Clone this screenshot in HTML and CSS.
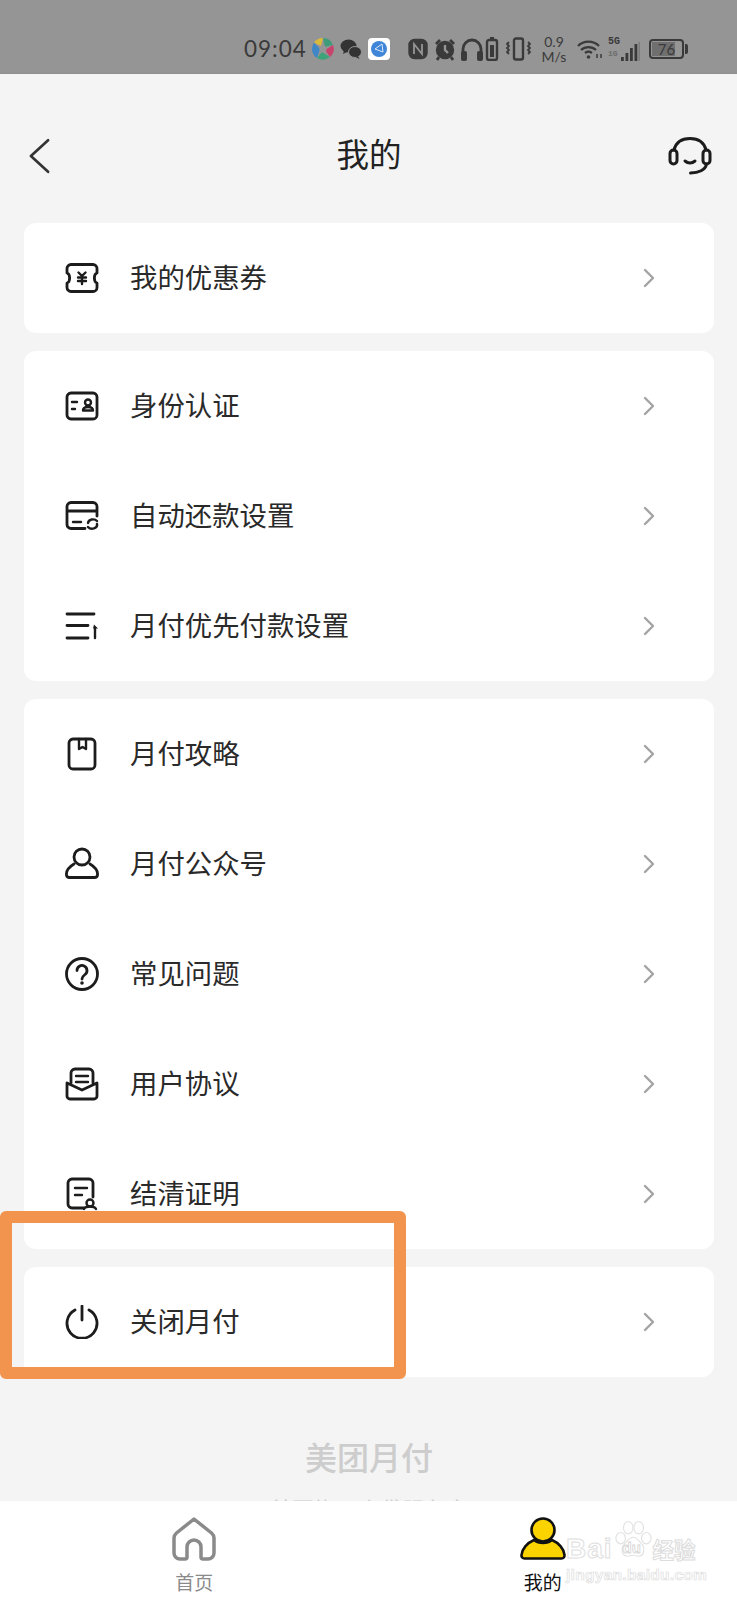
FILE: index.html
```html
<!DOCTYPE html>
<html lang="zh-CN">
<head>
<meta charset="utf-8">
<title>我的</title>
<link rel="stylesheet" href="styles.css">
</head>
<body>
<div class="screen">
  <div class="status">
    <span class="time">09:04</span>
    <div class="apps">
      <svg class="app" viewBox="0 0 22 22"><path d="M11 0A11 11 0 0 0 2 4.500L9 8Z" fill="#d9b93a"/><path d="M11 0A11 11 0 0 1 21 7L13 9Z" fill="#3f9c7a"/><path d="M21 7A11 11 0 0 1 18 19L13 12Z" fill="#c9446c"/><path d="M18 19A11 11 0 0 1 5 20L10 14Z" fill="#3fa37a"/><path d="M5 20A11 11 0 0 1 2 4.500L8 11Z" fill="#3f86c6"/><circle cx="11" cy="11" r="3.500" fill="#959595"/></svg>
      <svg class="app" viewBox="0 0 22 22" fill="#333"><ellipse cx="8.500" cy="8" rx="8" ry="6.500"/><path d="M4 12l-1 4 4-2z"/><ellipse cx="15" cy="14" rx="6.500" ry="5.500" stroke="#959595"/><path d="M18 18l1.500 3-4-2z"/></svg>
      <svg class="app" viewBox="0 0 22 22"><rect width="22" height="22" rx="4" fill="#fff"/><circle cx="11" cy="11" r="8" fill="#3f86d8"/><path d="M7 11L14 6M7 11l8 3M14 6l1 8" stroke="#dce9f7" stroke-width="1" fill="none"/></svg>
    </div>
    <svg class="sys" viewBox="0 0 123 24" fill="none" stroke="#3a3a3a" stroke-width="2.400">
      <rect x="1.500" y="3" width="17" height="18" rx="5" fill="#3a3a3a"/><path d="M6 17V7l8 10V7" stroke="#959595" stroke-width="1.800"/>
      <circle cx="37" cy="13" r="8" fill="#3a3a3a"/><path d="M37 8v5l3 3" stroke="#959595"/><path d="M28 7l4-4M46 7l-4-4M31 20l-2 3M43 20l2 3" stroke-width="2.800"/>
      <path d="M55 19v-7a9 9 0 0 1 18 0v7" stroke-width="2.800"/><rect x="53" y="14" width="6" height="10" rx="2" fill="#3a3a3a" stroke="none"/><rect x="69" y="14" width="6" height="10" rx="2" fill="#3a3a3a" stroke="none"/>
      <rect x="79" y="3" width="10" height="20" rx="2"/><rect x="82" y="8" width="4" height="12" fill="#3a3a3a" stroke="none"/><path d="M82 1h4"/>
      <rect x="106" y="1.500" width="9" height="21" rx="2"/><path d="M101 5l-2 2 2 2-2 2 2 2-2 2 2 2M120 5l2 2-2 2 2 2-2 2 2 2-2 2" stroke-width="1.800"/>
    </svg>
    <div class="speed"><span>0.9</span><span>M/s</span></div>
    <svg class="wifi" viewBox="0 0 26 20" fill="none" stroke="#3a3a3a" stroke-width="2.200"><path d="M1 7a15 15 0 0 1 21 0M4 11a11 11 0 0 1 15 0M8 14a6 6 0 0 1 7 0"/><circle cx="11.500" cy="18" r="1.800" fill="#3a3a3a" stroke="none"/><path d="M20 15v4M24 15v4" stroke-width="1.500"/></svg>
    <div class="net">
      <span class="gen">5G</span>
      <span class="gen2">1G</span>
      <svg class="bars" viewBox="0 0 20 20"><rect x="1" y="15" width="2.800" height="4" fill="#3a3a3a"/><rect x="5.500" y="11" width="2.800" height="8" fill="#3a3a3a"/><rect x="10" y="6" width="2.800" height="13" fill="#3a3a3a"/><rect x="14.500" y="2" width="2.800" height="17" fill="#3a3a3a"/><rect x="18.500" y="0" width="1.500" height="19" fill="#7c7c7c"/></svg>
    </div>
    <div class="batt"><span class="batt-body"><span class="batt-level"></span><span class="batt-num">76</span></span><span class="batt-tip"></span></div>
  </div>

  <header class="top">
    <svg class="back" viewBox="0 0 22 36" fill="none" stroke="#333" stroke-width="2.800" stroke-linecap="round" stroke-linejoin="round"><path d="M20 1.500L2 18l18 16.500"/></svg>
    <h1 class="title">我的</h1>
    <svg class="help" viewBox="0 0 44 38" fill="none" stroke="#1c1c1c" stroke-width="3" stroke-linecap="round"><path d="M6 13C8 5 14 1.500 22 1.500S36 5 38 13"/><rect x="2" y="13" width="7" height="14" rx="3.500"/><rect x="35" y="13" width="7" height="14" rx="3.500"/><path d="M17 24c3 2.500 7 2.500 10 0"/><path d="M38.500 27c-1 6-8 9-16 9"/></svg>
  </header>

  <main class="list">
    <section class="card">
      <div class="row">
        <svg class="ico" viewBox="0 0 34 30"><path d="M6 1.500h22a4 4 0 0 1 4 4V10c-3.500 1-3.500 9 0 10v4.500a4 4 0 0 1-4 4H6a4 4 0 0 1-4-4V20c3.500-1 3.500-9 0-10V5.500a4 4 0 0 1 4-4z"/><path class="thin" d="M13.500 9.500l3.500 3.500 3.500-3.500M13 14.500h8M13 18h8M17 13v8"/></svg>
        <span class="label">我的优惠券</span>
        <svg class="chev" viewBox="0 0 12 20"><path d="M2 2l8 8-8 8"/></svg>
      </div>
    </section>

    <section class="card">
      <div class="row">
        <svg class="ico" viewBox="0 0 34 30"><rect x="2" y="2" width="30" height="26" rx="4"/><path class="thin" d="M7 11h5M7 18h3"/><circle class="thin" cx="23" cy="11.500" r="3"/><path class="thin" d="M18 19.500c0-2.500 2-3.500 5-3.500s5 1 5 3.500z"/></svg>
        <span class="label">身份认证</span>
        <svg class="chev" viewBox="0 0 12 20"><path d="M2 2l8 8-8 8"/></svg>
      </div>
      <div class="row">
        <svg class="ico" viewBox="0 0 34 30"><path d="M20 27.500H6a4 4 0 0 1-4-4v-18a4 4 0 0 1 4-4h22a4 4 0 0 1 4 4V15M2 10h30"/><path class="thin" d="M8 21h8"/><path class="thin" d="M23 22a5 4 0 0 1 9-2M32 23a5 4 0 0 1-9 3"/></svg>
        <span class="label">自动还款设置</span>
        <svg class="chev" viewBox="0 0 12 20"><path d="M2 2l8 8-8 8"/></svg>
      </div>
      <div class="row">
        <svg class="ico" viewBox="0 0 34 30"><path d="M2 3h27M2 14.500h21M2 27h21"/><path class="thin" d="M30 27V17"/><path d="M33 17.500l-4-4-1 4z" fill="#1c1c1c" stroke="none"/></svg>
        <span class="label">月付优先付款设置</span>
        <svg class="chev" viewBox="0 0 12 20"><path d="M2 2l8 8-8 8"/></svg>
      </div>
    </section>

    <section class="card">
      <div class="row">
        <svg class="ico" viewBox="0 0 34 34"><rect x="4" y="2" width="26" height="30" rx="4"/><path class="thin" d="M14 2v10l3.500-2 3.500 2V2"/></svg>
        <span class="label">月付攻略</span>
        <svg class="chev" viewBox="0 0 12 20"><path d="M2 2l8 8-8 8"/></svg>
      </div>
      <div class="row">
        <svg class="ico" viewBox="0 0 34 34"><circle cx="17" cy="10" r="8"/><path d="M9 17C4 20 1 24 1.500 28c.2 1.500 1.500 2.500 3 2.500h25c1.500 0 2.800-1 3-2.500.5-4-2.500-8-7.500-11"/></svg>
        <span class="label">月付公众号</span>
        <svg class="chev" viewBox="0 0 12 20"><path d="M2 2l8 8-8 8"/></svg>
      </div>
      <div class="row">
        <svg class="ico" viewBox="0 0 34 34"><circle cx="17" cy="17" r="15.500"/><path d="M12 13.500a5 5 0 1 1 8 4c-2 1.500-3 2.300-3 4.500"/><circle cx="17" cy="26" r="1.800" fill="#1c1c1c" stroke="none"/></svg>
        <span class="label">常见问题</span>
        <svg class="chev" viewBox="0 0 12 20"><path d="M2 2l8 8-8 8"/></svg>
      </div>
      <div class="row">
        <svg class="ico" viewBox="0 0 34 34"><path d="M6 16V6a4 4 0 0 1 4-4h14a4 4 0 0 1 4 4v10"/><path d="M2 16l15 7 15-7v13a3 3 0 0 1-3 3H5a3 3 0 0 1-3-3z"/><path class="thin" d="M11 9h12M11 15h12"/></svg>
        <span class="label">用户协议</span>
        <svg class="chev" viewBox="0 0 12 20"><path d="M2 2l8 8-8 8"/></svg>
      </div>
      <div class="row">
        <svg class="ico" viewBox="0 0 34 34"><path d="M19 31H7a4 4 0 0 1-4-4V6a4 4 0 0 1 4-4h17a4 4 0 0 1 4 4v14"/><path class="thin" d="M10 11h12M10 18h7"/><circle class="thin" cx="25" cy="26" r="3.500"/><path class="thin" d="M19 32c1-2 3-2.500 6-2.500s5 .5 6 2.500"/></svg>
        <span class="label">结清证明</span>
        <svg class="chev" viewBox="0 0 12 20"><path d="M2 2l8 8-8 8"/></svg>
      </div>
    </section>

    <section class="card">
      <div class="row">
        <svg class="ico" viewBox="0 0 34 34"><path d="M10 5a15 15 0 1 0 14 0"/><path d="M17 1v14"/></svg>
        <span class="label">关闭月付</span>
        <svg class="chev" viewBox="0 0 12 20"><path d="M2 2l8 8-8 8"/></svg>
      </div>
    </section>

    <footer class="brand">
      <p class="brand-name">美团月付</p>
      <p class="brand-sub">美团旗下小贷服务商</p>
    </footer>
  </main>

  <nav class="tabs">
    <div class="tab">
      <svg class="tab-ico" viewBox="0 0 44 44" fill="none" stroke="#8a8a8a" stroke-width="3.500" stroke-linejoin="round"><path d="M22 2L4.500 16C2.800 17.500 2 19 2 21v15a6 6 0 0 0 6 6h5a2 2 0 0 0 2-2V30a7 7 0 0 1 14 0v10a2 2 0 0 0 2 2h5a6 6 0 0 0 6-6V21c0-2-.8-3.500-2.500-5z"/></svg>
      <span class="tab-text">首页</span>
    </div>
    <div class="tab tab-on">
      <svg class="tab-ico" viewBox="0 0 46 44" stroke="#111" stroke-width="2.600" fill="#fbd400" stroke-linejoin="round"><circle cx="23" cy="13" r="11.500"/><path d="M14 23C7 26 2 32 1.500 38c-.2 2 1 3.500 3 3.500h37c2 0 3.200-1.500 3-3.500-.5-6-5.500-12-12.500-15-2.500 2-5.500 3-9 3s-6.500-1-9-3z"/></svg>
      <span class="tab-text">我的</span>
    </div>
  </nav>

  <div class="frame"></div>

  <div class="mark">
    <div class="mark-top">
      <span class="mark-en">Bai</span>
      <svg class="paw" viewBox="0 0 40 42" fill="#fff" stroke="#e2e2e2" stroke-width="1.200"><ellipse cx="7" cy="18" rx="5" ry="6"/><ellipse cx="15" cy="7" rx="5" ry="6.500"/><ellipse cx="26" cy="7" rx="5" ry="6.500"/><ellipse cx="34" cy="18" rx="5" ry="6"/><path d="M20 17c-4 0-6 4-9 7-4 4-3 13 3 13 2 0 4-1 6-1s4 1 6 1c6 0 7-9 3-13-3-3-5-7-9-7z"/></svg>
      <span class="mark-du">du</span>
      <span class="mark-cn">经验</span>
    </div>
    <div class="mark-url">jingyan.baidu.com</div>
  </div>
</div>
</body>
</html>
```

FILE: styles.css
```css
* { box-sizing: border-box; }
html, body { margin: 0; padding: 0; }
body { font-family: "Noto Sans CJK SC", "Noto Sans", sans-serif; }

.screen {
  position: relative;
  width: 737px;
  height: 1600px;
  background: #f4f4f4;
  overflow: hidden;
  display: flex;
  flex-direction: column;
}

/* status bar */
.status {
  flex: none;
  height: 74px;
  background: #959595;
  border-bottom: 1px solid #8f8f8f;
  display: flex;
  align-items: center;
  padding: 27px 0 3px 244px;
  color: #3a3a3a;
}
.time { font-family: "Lato", sans-serif; font-size: 22.500px; letter-spacing: 1px; width: 68px; }
.apps { display: flex; gap: 6px; width: 96px; }
.app { width: 22px; height: 22px; }
.sys { width: 123px; height: 24px; }
.speed {
  margin-left: 10px;
  width: 26px;
  display: flex;
  flex-direction: column;
  align-items: center;
  font-family: "Lato", sans-serif;
  font-size: 14px;
  line-height: 15px;
}
.wifi { margin-left: 10px; width: 26px; height: 20px; }
.net { position: relative; margin-left: 4px; width: 33px; height: 26px; }
.gen { position: absolute; left: 1px; top: 0; font: bold 10px/11px "Liberation Mono", monospace; }
.gen2 { position: absolute; left: 1px; top: 13px; font: bold 8px/10px "Liberation Mono", monospace; color: #6b6b6b; }
.bars { position: absolute; right: 0; bottom: 0; width: 20px; height: 20px; }
.batt { margin-left: 9px; display: flex; align-items: center; gap: 1px; }
.batt-body {
  position: relative;
  width: 35px;
  height: 20px;
  border: 2px solid #3a3a3a;
  border-radius: 4px;
  display: flex;
  align-items: center;
  justify-content: center;
}
.batt-level { position: absolute; left: 1px; top: 1px; bottom: 1px; width: 23px; background: #6f6f6f; }
.batt-num { position: relative; font: 15px/16px "Lato", sans-serif; }
.batt-tip { width: 3px; height: 10px; background: #3a3a3a; border-radius: 0 2px 2px 0; }

/* header */
.top {
  flex: none;
  height: 149px;
  padding: 14px 25px 0 29px;
  display: grid;
  grid-template-columns: 1fr auto 1fr;
  align-items: center;
}
.back { width: 21px; height: 36px; }
.title {
  margin: 0 3px 6px 0;
  font-size: 32.500px;
  font-weight: 400;
  line-height: 44px;
  color: #222;
}
.help { width: 44px; height: 38px; justify-self: end; }

/* list */
.list {
  flex: 1;
  min-height: 0;
  padding: 0 23px 0 24px;
  display: flex;
  flex-direction: column;
  gap: 18px;
  overflow: hidden;
}
.card {
  flex: none;
  background: #fff;
  border-radius: 12px;
}
.row {
  height: 110px;
  padding: 0 58px 0 41px;
  display: flex;
  align-items: center;
}
.ico {
  flex: none;
  width: 34px;
  height: 34px;
  fill: none;
  stroke: #1c1c1c;
  stroke-width: 2.800;
  stroke-linecap: round;
  stroke-linejoin: round;
}
.ico .thin { stroke-width: 2.400; }
.label {
  flex: 1;
  margin-left: 31px;
  padding-bottom: 5px;
  font-size: 27.400px;
  line-height: 40px;
  color: #2a2a2a;
}
.chev {
  flex: none;
  width: 12px;
  height: 20px;
  margin-right: 1px;
  fill: none;
  stroke: #a3a3a3;
  stroke-width: 2.400;
  stroke-linecap: round;
  stroke-linejoin: round;
}

.brand { flex: none; margin-top: 39px; text-align: center; }
.brand-name {
  margin: 0;
  font-size: 32px;
  line-height: 44px;
  font-weight: 500;
  color: #cdcdcd;
}
.brand-sub {
  margin: 15px 0 0;
  font-size: 22px;
  line-height: 30px;
  color: #cdcdcd;
}

/* tabs */
.tabs {
  flex: none;
  height: 99px;
  padding: 0 20px;
  background: #fff;
  display: grid;
  grid-template-columns: 1fr 1fr;
}
.tab {
  display: flex;
  flex-direction: column;
  align-items: center;
  padding-top: 16px;
}
.tab-ico { width: 46px; height: 44px; }
.tab-text {
  margin-top: 8px;
  font-size: 19px;
  line-height: 26px;
  color: #8a8a8a;
}
.tab-on .tab-text { color: #111; }

/* annotation over the screenshot */
.frame {
  position: absolute;
  left: 0;
  top: 1211px;
  width: 406px;
  height: 168px;
  border: 12px solid #f2944d;
  border-radius: 6px;
}

/* watermark */
.mark {
  position: absolute;
  left: 566px;
  top: 1520px;
  width: 135px;
  color: #fff;
}
.mark-top { display: flex; align-items: flex-end; height: 42px; }
.mark-en {
  font: bold 28px/26px "Liberation Sans", sans-serif;
  -webkit-text-stroke: 1px #dedede;
  letter-spacing: 1px;
}
.paw { flex: none; width: 38px; height: 42px; margin-left: 1px; }
.mark-du {
  margin-left: -29px;
  width: 29px;
  padding-bottom: 5px;
  font: bold 15px/18px "Liberation Sans", sans-serif;
  -webkit-text-stroke: .8px #d4d4d4;
}
.mark-cn {
  margin-left: 1px;
  font-size: 21.500px;
  line-height: 26px;
  font-weight: 700;
  white-space: nowrap;
  -webkit-text-stroke: 1px #dcdcdc;
}
.mark-url {
  margin-top: 5px;
  font: bold 15.500px/16px "Liberation Sans", sans-serif;
  letter-spacing: .3px;
  -webkit-text-stroke: .7px #dedede;
  white-space: nowrap;
}
```
